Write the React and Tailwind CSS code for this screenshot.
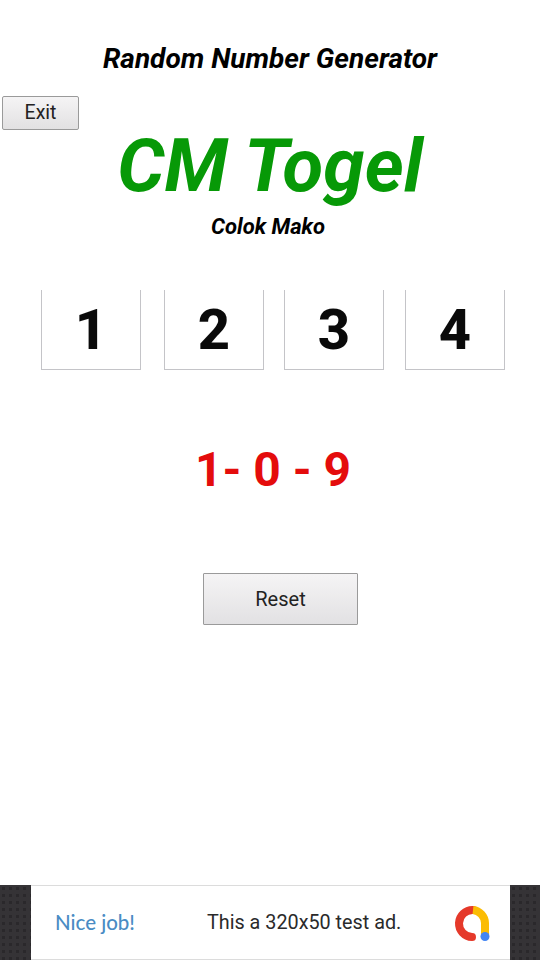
export default function App() {
  const digits = [
    { d: "1", m: "ml-[41px]" },
    { d: "2", m: "ml-[23px]" },
    { d: "3", m: "ml-[20px]" },
    { d: "4", m: "ml-[21px]" },
  ];
  const pattern =
    "bg-[#353336] bg-[radial-gradient(circle,#2a282b_1.5px,transparent_2px)] bg-[length:7px_7px]";
  return (
    <div className="w-[540px] h-[960px] bg-white flex flex-col font-['Roboto',sans-serif] text-black overflow-hidden">
      <main className="flex-1 flex flex-col">
        <h1 className="mt-[41px] h-[36px] text-center text-[28px] leading-[36px] font-bold italic">
          Random Number Generator
        </h1>
        <div className="mt-[19px] pl-[2px] h-[34px] flex">
          <button className="w-[77px] h-[34px] border border-[#9a9a9a] rounded-[2px] bg-gradient-to-b from-[#f5f4f5] to-[#e2e1e2] text-[19.5px] leading-none text-[#222]">
            Exit
          </button>
        </div>
        <p className="mt-[-1px] h-[74px] text-center text-[74.5px] leading-[74px] font-bold italic text-[#079907]">
          CM Togel
        </p>
        <p className="mt-[9px] h-[30px] pr-[4px] text-center text-[22px] leading-[30px] font-bold italic">
          Colok Mako
        </p>
        <div className="mt-[48px] flex">
          {digits.map(({ d, m }) => (
            <div
              key={d}
              className={`${m} w-[100px] h-[80px] border-x border-b border-[#c4c4c8] flex items-center justify-center text-[56px] font-extrabold leading-none text-[#0a0a0a]`}
            >
              {d}
            </div>
          ))}
        </div>
        <p className="mt-[70px] h-[60px] pl-[6px] text-center text-[48px] leading-[60px] font-bold text-[#e40c0c]">
          1- 0 - 9
        </p>
        <div className="mt-[73px] pl-[203px] flex">
          <button className="w-[155px] h-[52px] border border-[#9a9a9a] rounded-[1px] bg-gradient-to-b from-[#f5f4f5] to-[#e2e1e3] text-[20px] leading-none text-[#222]">
            Reset
          </button>
        </div>
      </main>
      <footer className="h-[75px] flex">
        <div className={`w-[31px] ${pattern}`} />
        <div className="flex-1 bg-white border-y border-[#dcdcdc] flex items-center pl-[24px] pr-[17px]">
          <span className="w-[152px] text-[20.5px] font-medium text-[#4a8cc4] font-['Lato','Roboto',sans-serif]">
            Nice job!
          </span>
          <span className="mt-[1px] text-[19.8px] text-[#2a2a2a] font-['Roboto',sans-serif]">
            This a 320x50 test ad.
          </span>
          <svg className="ml-auto" width="40" height="40" viewBox="0 0 40 40" fill="none">
            <path d="M19 34 A 13.5 13.5 0 1 1 20 7" stroke="#e5392a" strokeWidth="8" strokeLinecap="round" />
            <path d="M20 7 A 13.5 13.5 0 0 1 32 20 L 32 33" stroke="#fbbc04" strokeWidth="8" />
            <circle cx="32" cy="33.5" r="4.5" fill="#4285f4" />
          </svg>
        </div>
        <div className={`w-[30px] ${pattern}`} />
      </footer>
    </div>
  );
}
